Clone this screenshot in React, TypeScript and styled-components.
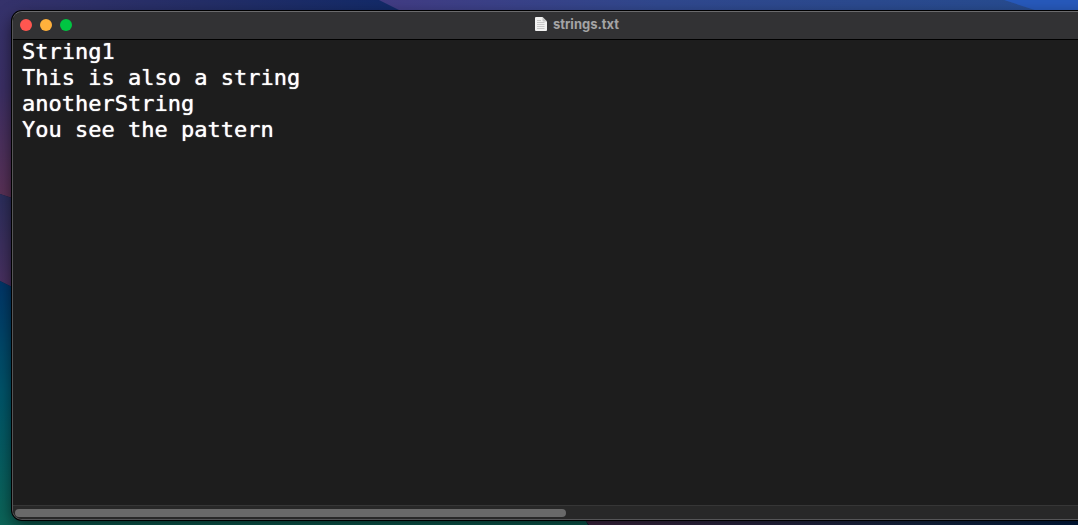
import React, { useState } from "react";
import styled, { createGlobalStyle } from "styled-components";

const GlobalStyle = createGlobalStyle`
  * { box-sizing: border-box; }
  body { margin: 0; background: #101a30; }
`;

const Desktop = styled.div`
  position: relative;
  display: flex;
  min-height: 100vh;
  padding: 11px 0 5px 12px;
  overflow: hidden;
`;

const Wallpaper = styled.svg`
  position: absolute;
  inset: 0;
  width: 100%;
  height: 100%;
`;

const Window = styled.main`
  position: relative;
  display: flex;
  flex: 0 0 calc(100% + 64px);
  flex-direction: column;
  overflow: hidden;
  border: 1px solid #555557;
  border-top-color: #6b6b6d;
  border-radius: 10px;
  background: #1d1d1d;
  box-shadow: 0 0 0 1px #000, 0 6px 16px rgba(0, 0, 0, 0.6);
`;

const TitleBar = styled.header`
  position: relative;
  display: grid;
  grid-template-columns: 1fr auto 1fr;
  align-items: center;
  height: 27px;
  padding: 0 7px 1px;
  background: #323234;
  box-shadow: 0 1px 0 #000;
`;

const Controls = styled.div`
  display: flex;
  gap: 8px;
`;

const ControlButton = styled.button<{ $color: string }>`
  width: 12px;
  height: 12px;
  padding: 0;
  border: 0;
  border-radius: 50%;
  background: ${(p) => p.$color};
`;

const Title = styled.h1`
  display: flex;
  align-items: center;
  gap: 6px;
  margin: 0;
  padding-bottom: 2px;
  color: #a4a4a5;
  font: bold 13px/16px Inter, "Liberation Sans", sans-serif;
`;

const Editor = styled.textarea`
  flex: 1;
  width: 100%;
  min-height: 104px;
  padding: 0 9px;
  border: 0;
  outline: 0;
  resize: none;
  overflow: hidden;
  background: #1d1d1d;
  color: #fff;
  font: 22px/26px "DejaVu Sans Mono", monospace;
  text-shadow: 0 0 1px #fff;
  white-space: pre;
`;

const ScrollTrack = styled.div`
  height: 14px;
  padding: 3px 2px;
  border-top: 1px solid #363636;
  background: #282828;
`;

const ScrollThumb = styled.div`
  width: 49%;
  height: 8px;
  border-radius: 4px;
  background: #696969;
`;

const controls = [
  { label: "Close", color: "#ff5650" },
  { label: "Minimize", color: "#ffb13c" },
  { label: "Zoom", color: "#00c542" },
];

const initialText = [
  "String1",
  "This is also a string",
  "anotherString",
  "You see the pattern",
].join("\n");

function DocumentIcon() {
  return (
    <svg width="12" height="14" viewBox="0 0 12 14" aria-hidden="true">
      <path d="M1 0h6.5L12 4.5V13a1 1 0 0 1-1 1H1a1 1 0 0 1-1-1V1a1 1 0 0 1 1-1z" fill="#f2f2f2" />
      <path d="M7.5 0 12 4.5H8.500a1 1 0 0 1-1-1z" fill="#c6c6c6" />
      <path d="M2 3.500h4M2 5.500h7.500M2 7.500h7.500M2 9.500h7.500M2 11.500h7.500" stroke="#bcbcbc" strokeWidth=".8" />
    </svg>
  );
}

function DesktopPicture() {
  return (
    <Wallpaper viewBox="0 0 1078 525" preserveAspectRatio="none" aria-hidden="true">
      <defs>
        <linearGradient id="navy" x1="0" x2="1" y1="0" y2="0">
          <stop offset="0" stopColor="#35326b" />
          <stop offset=".5" stopColor="#242e67" />
          <stop offset="1" stopColor="#122a68" />
        </linearGradient>
        <linearGradient id="violet" x1="0" x2="1" y1="0" y2="0">
          <stop offset="0" stopColor="#423c84" />
          <stop offset=".4" stopColor="#30488e" />
          <stop offset="1" stopColor="#264c90" />
        </linearGradient>
        <linearGradient id="plum" x1="0" x2="0" y1="0" y2="1">
          <stop offset="0" stopColor="#35326b" />
          <stop offset=".4" stopColor="#3b2f65" />
          <stop offset="1" stopColor="#5c3155" />
        </linearGradient>
        <linearGradient id="indigo" x1="0" x2="0" y1="0" y2="1">
          <stop offset="0" stopColor="#2b2e5c" />
          <stop offset="1" stopColor="#4c3060" />
        </linearGradient>
        <linearGradient id="teal" x1="0" x2="0" y1="0" y2="1">
          <stop offset="0" stopColor="#003568" />
          <stop offset=".45" stopColor="#00546a" />
          <stop offset="1" stopColor="#0c6558" />
        </linearGradient>
        <linearGradient id="dusk" x1="0" x2="1" y1="0" y2="0">
          <stop offset="0" stopColor="#482b4b" />
          <stop offset=".7" stopColor="#182d50" />
          <stop offset="1" stopColor="#00204c" />
        </linearGradient>
      </defs>
      <path d="M0 0h400v20H0z" fill="url(#navy)" />
      <path d="M379 0h700v20H419z" fill="url(#violet)" />
      <path d="M1004 0h74v24z" fill="#2759bb" />
      <path d="M0 8h30v196L0 194z" fill="url(#plum)" />
      <path d="M0 194l30 10v92L0 281z" fill="url(#indigo)" />
      <path d="M0 281l30 15v214h550l8 15H0z" fill="url(#teal)" />
      <path d="M578 510h500v15H589z" fill="url(#dusk)" />
    </Wallpaper>
  );
}

export default function App() {
  const [text, setText] = useState(initialText);

  return (
    <>
      <GlobalStyle />
      <Desktop>
        <DesktopPicture />
        <Window>
          <TitleBar>
            <Controls>
              {controls.map((c) => (
                <ControlButton key={c.label} type="button" aria-label={c.label} $color={c.color} />
              ))}
            </Controls>
            <Title>
              <DocumentIcon />
              strings.txt
            </Title>
          </TitleBar>
          <Editor
            aria-label="strings.txt"
            spellCheck={false}
            value={text}
            onChange={(e) => setText(e.target.value)}
          />
          <ScrollTrack>
            <ScrollThumb />
          </ScrollTrack>
        </Window>
      </Desktop>
    </>
  );
}
